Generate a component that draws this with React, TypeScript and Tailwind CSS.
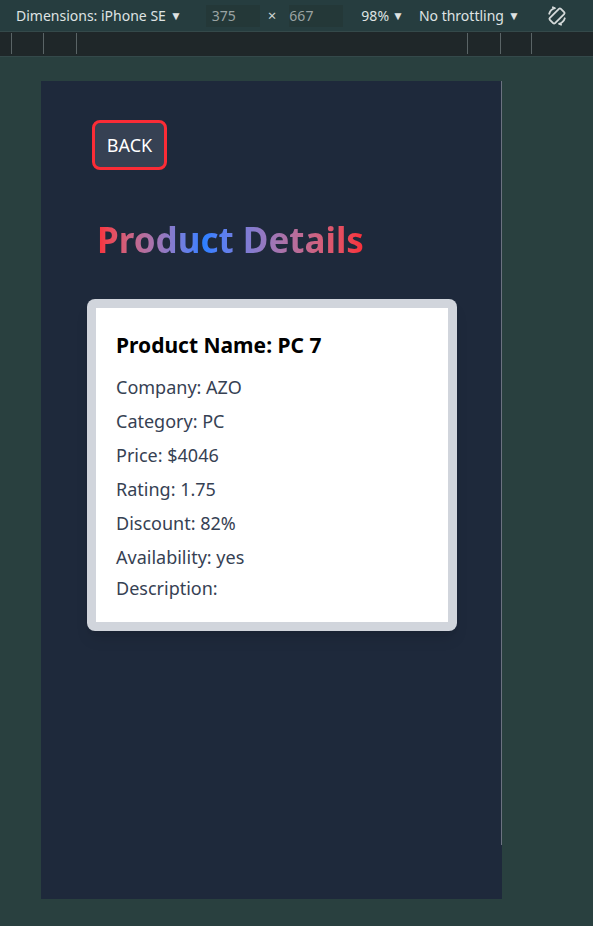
const details = [
  ["Company", "AZO"],
  ["Category", "PC"],
  ["Price", "$4046"],
  ["Rating", "1.75"],
  ["Discount", "82%"],
  ["Availability", "yes"],
]

function RotateIcon() {
  return (
    <svg viewBox="0 0 24 24" className="w-[22px] h-[22px]" fill="none" stroke="#d4d9d9" strokeWidth={2} strokeLinecap="round">
      <rect x="8" y="3.5" width="8" height="17" rx="1.5" transform="rotate(45 12 12)" />
      <path d="M3.5 9.5 A9 9 0 0 1 9.5 3.5" />
      <path d="M20.5 14.5 A9 9 0 0 1 14.5 20.5" />
      <path d="M9.5 3.5 L7.5 2.5" />
      <path d="M14.5 20.5 L16.5 21.5" />
    </svg>
  )
}

function Toolbar() {
  return (
    <div className="h-[31px] bg-[#263d3f] flex items-center text-[14px] text-[#dfe3e3] font-['Noto_Sans',sans-serif]">
      <span className="ml-[16px]">Dimensions: iPhone SE</span>
      <span className="ml-[4px] text-[12px]">▼</span>
      <div className="ml-[24px] w-[54px] h-[22px] bg-[#243838] flex items-center pl-[6px] text-[#9aa3a3]">375</div>
      <span className="ml-[8px] text-[#cfd4d4] text-[15px]">×</span>
      <div className="ml-[13px] w-[54px] h-[22px] bg-[#243838] flex items-center text-[#9aa3a3]">667</div>
      <span className="ml-[18px]">98%</span>
      <span className="ml-[3px] text-[12px]">▼</span>
      <span className="ml-[15px]">No throttling</span>
      <span className="ml-[4px] text-[12px]">▼</span>
      <div className="ml-[26px]">
        <RotateIcon />
      </div>
    </div>
  )
}

function Ruler() {
  return (
    <div className="h-[26px] bg-[#1f2729] border-t border-b border-[#34494a] relative">
      {[11, 43, 76, 467, 500, 531].map((x) => (
        <div key={x} className="absolute top-[1px] h-[21px] w-px bg-[#5a6466]" style={{ left: x }} />
      ))}
    </div>
  )
}

export default function App() {
  return (
    <div className="min-h-[926px] bg-[#29403f] flex flex-col">
      <Toolbar />
      <Ruler />
      <div className="pl-[41px] pt-[24px]">
        <div className="relative w-[461px] h-[818px] bg-[#1e293b] pl-[51px] pt-[39px] font-['Noto_Sans',sans-serif]">
          <div className="absolute right-0 top-0 w-px h-[764px] bg-[#6b7280]" />
          <div>
            <button className="w-[75px] h-[50px] border-[3px] border-red-500 rounded-lg bg-gray-700 text-white text-[18px]">
              BACK
            </button>
          </div>
          <div className="mt-[48px] ml-[5px]">
            <h1 className="inline-block text-[35px] font-bold leading-[44px] text-transparent bg-clip-text bg-gradient-to-r from-red-500 via-blue-500 via-40% to-red-500">
              Product Details
            </h1>
          </div>
          <div className="mt-[37px] -ml-[5px] w-[370px] bg-gray-300 rounded-lg p-[9px] shadow-lg">
            <div className="bg-white px-[20px] pt-[23px] pb-[20px]">
              <h2 className="text-[21px] font-bold text-black leading-[28px]">Product Name: PC 7</h2>
              <div className="mt-[14px] flex flex-col gap-[6px]">
                {details.map(([k, v]) => (
                  <p key={k} className="text-[18px] leading-[28px] text-gray-700">
                    {k}: {v}
                  </p>
                ))}
              </div>
              <p className="mt-[3px] text-[18px] leading-[28px] text-gray-700">Description:</p>
            </div>
          </div>
        </div>
      </div>
    </div>
  )
}
